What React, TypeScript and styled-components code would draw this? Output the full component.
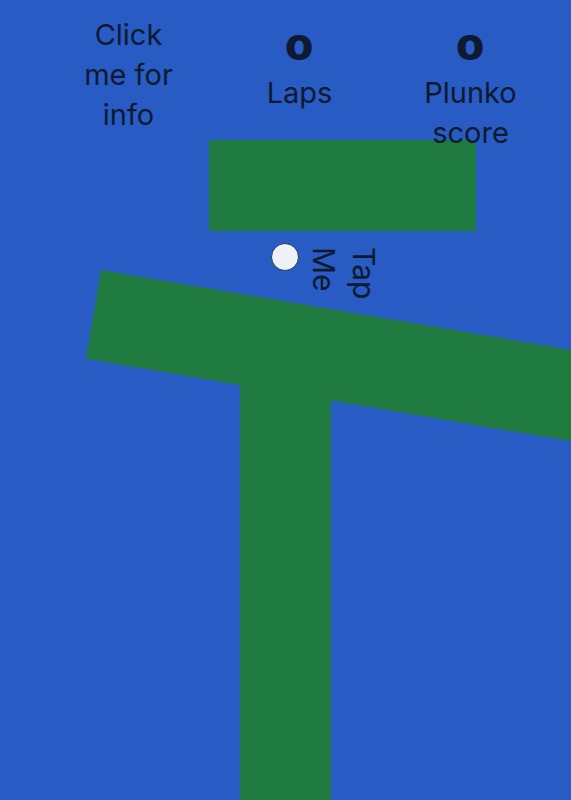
import React from 'react';
import styled, { createGlobalStyle } from 'styled-components';

const GlobalStyle = createGlobalStyle`
  html, body {
    margin: 0;
    padding: 0;
    background: #285bc4;
  }
  body {
    font-family: Inter, 'Liberation Sans', sans-serif;
    color: #0e1a30;
  }
`;

const Board = styled.div`
  position: relative;
  width: 571px;
  height: 800px;
  overflow: hidden;
  background: #285bc4;
`;

const Scoreboard = styled.header`
  display: grid;
  grid-template-columns: repeat(3, 171px);
  align-items: start;
  padding: 15px 0 0 43px;
  position: relative;
  z-index: 2;
`;

const InfoButton = styled.button`
  border: none;
  background: none;
  padding: 0;
  font: inherit;
  color: inherit;
  font-size: 29px;
  line-height: 40px;
  text-align: center;
  cursor: pointer;
  width: 104px;
  justify-self: center;
`;

const Stat = styled.div`
  display: flex;
  flex-direction: column;
  align-items: center;
  padding-top: 8px;
  text-align: center;
`;

const StatValue = styled.div`
  font-size: 34px;
  font-weight: 900;
  line-height: 50px;
  transform: scaleX(1.15);
`;

const StatLabel = styled.div`
  font-size: 29px;
  line-height: 40px;
  width: 120px;
`;

const Block = styled.div<{ $x: number; $y: number; $w: number; $h: number; $angle?: number }>`
  position: absolute;
  left: ${(p) => p.$x}px;
  top: ${(p) => p.$y}px;
  width: ${(p) => p.$w}px;
  height: ${(p) => p.$h}px;
  background: #1e7a3f;
  transform-origin: top left;
  transform: rotate(${(p) => p.$angle ?? 0}deg);
`;

const Ball = styled.div`
  position: absolute;
  left: 271px;
  top: 243px;
  width: 26px;
  height: 26px;
  border-radius: 50%;
  background: #eef1f6;
  border: 1px solid #2b3550;
`;

const TapLabel = styled.div`
  position: absolute;
  left: 384px;
  top: 247px;
  font-size: 30px;
  line-height: 40px;
  white-space: nowrap;
  transform-origin: top left;
  transform: rotate(90deg);
`;

export default function App() {
  return (
    <>
      <GlobalStyle />
      <Board>
        <Scoreboard>
          <InfoButton>Click me for info</InfoButton>
          <Stat>
            <StatValue>0</StatValue>
            <StatLabel>Laps</StatLabel>
          </Stat>
          <Stat>
            <StatValue>0</StatValue>
            <StatLabel>Plunko score</StatLabel>
          </Stat>
        </Scoreboard>

        {/* launcher pad */}
        <Block $x={209} $y={140} $w={267} $h={91} />
        {/* post and tilted beam */}
        <Block $x={240} $y={360} $w={91} $h={440} />
        <Block $x={101} $y={270} $w={540} $h={90} $angle={9.66} />

        <Ball />
        <TapLabel>
          Tap
          <br />
          Me
        </TapLabel>
      </Board>
    </>
  );
}
